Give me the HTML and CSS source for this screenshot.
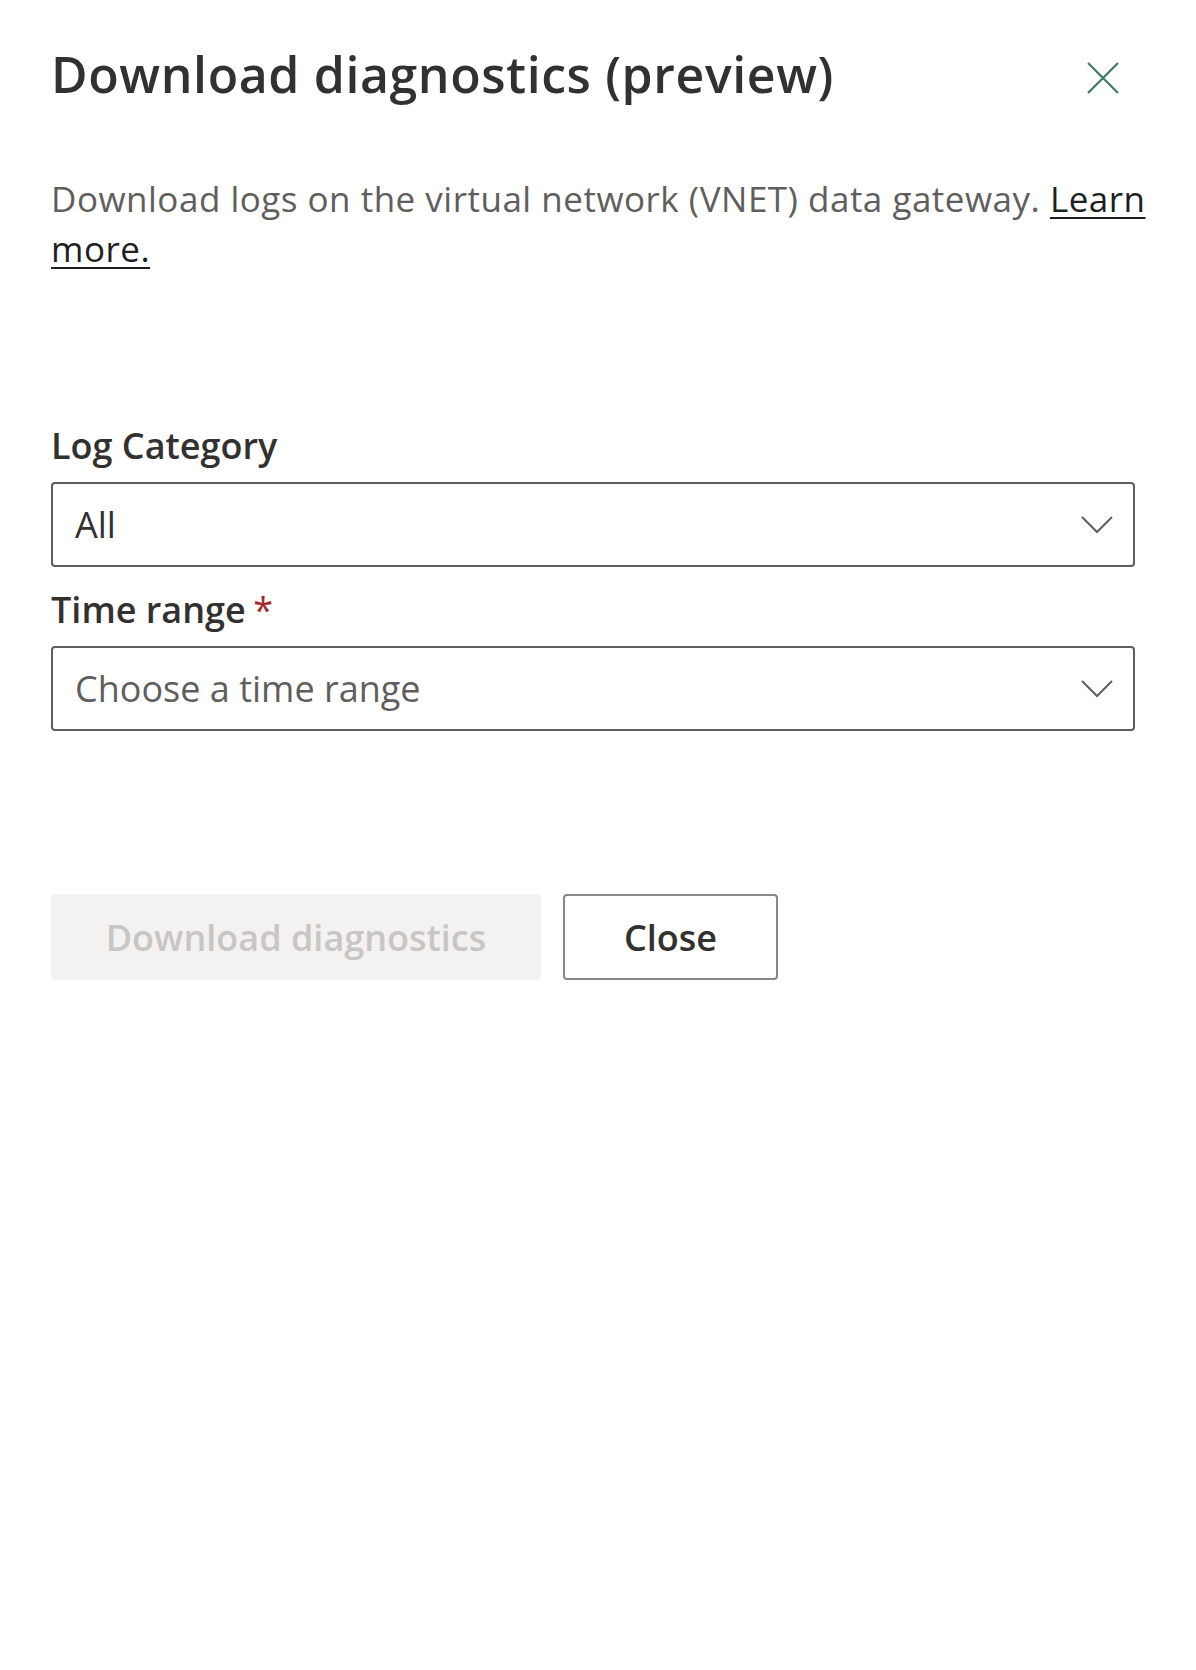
FILE: index.html
```html
<!DOCTYPE html>
<html lang="en">
<head>
<meta charset="utf-8">
<title>Download diagnostics (preview)</title>
<link rel="stylesheet" href="styles.css">
</head>
<body>
<div class="panel">
  <div class="header">
    <h1 class="title">Download diagnostics (preview)</h1>
    <button class="close-x" aria-label="Close">
      <svg width="32" height="32" viewBox="0 0 32 32"><path d="M1 1 L31 31 M31 1 L1 31" stroke="#3e7a66" stroke-width="2.2" fill="none"/></svg>
    </button>
  </div>
  <p class="desc">Download logs on the virtual network (VNET) data gateway. <a href="#" class="link">Learn more.</a></p>
  <div class="form">
    <label class="label">Log Category</label>
    <div class="dropdown">
      <span class="value">All</span>
      <svg class="chev" width="32" height="18" viewBox="0 0 32 18"><path d="M1 1 L16 16 L31 1" stroke="#605e5c" stroke-width="2" fill="none"/></svg>
    </div>
    <label class="label label-req">Time range <span class="req">*</span></label>
    <div class="dropdown">
      <span class="value placeholder">Choose a time range</span>
      <svg class="chev" width="32" height="18" viewBox="0 0 32 18"><path d="M1 1 L16 16 L31 1" stroke="#605e5c" stroke-width="2" fill="none"/></svg>
    </div>
  </div>
  <div class="actions">
    <button class="btn btn-primary" disabled>Download diagnostics</button>
    <button class="btn btn-default">Close</button>
  </div>
</div>
</body>
</html>
```

FILE: styles.css
```css
html, body {
  margin: 0;
  padding: 0;
  background: #ffffff;
}
body {
  font-family: "Segoe UI", "Open Sans", sans-serif;
  color: #323130;
}
.panel {
  padding: 0 51px;
  width: 1094px;
}
.header {
  display: flex;
  justify-content: space-between;
  align-items: flex-start;
  padding-top: 44px;
}
.title {
  margin: 0;
  font-size: 50px;
  line-height: 60px;
  font-weight: 600;
  color: #323130;
  letter-spacing: 0.6px;
}
.close-x {
  border: 0;
  background: transparent;
  padding: 0;
  margin: 18px 26px 0 0;
  width: 32px;
  height: 32px;
  display: flex;
}
.desc {
  margin: 70px 0 0 0;
  font-size: 35px;
  line-height: 50px;
  color: #605e5c;
  width: 1100px;
  letter-spacing: 0.5px;
}
.link {
  color: #201f1e;
  text-decoration: underline;
  text-underline-offset: 5px;
  text-decoration-thickness: 2px;
}
.form {
  display: flex;
  flex-direction: column;
  width: 1084px;
  margin-top: 147px;
}
.label {
  font-size: 36px;
  line-height: 50px;
  font-weight: 600;
  color: #323130;
  padding-bottom: 11px;
}
.req {
  color: #a4262c;
  font-weight: 400;
  margin-left: -2px;
}
.dropdown {
  box-sizing: border-box;
  height: 85px;
  border: 2px solid #605e5c;
  border-radius: 4px;
  display: flex;
  align-items: center;
  justify-content: space-between;
  padding: 0 20px 0 22px;
  margin-bottom: 18px;
}
.value {
  font-size: 36px;
  color: #323130;
}
.placeholder {
  color: #605e5c;
}
.chev {
  display: block;
}
.actions {
  display: flex;
  gap: 22px;
  margin-top: 145px;
}
.btn {
  box-sizing: border-box;
  height: 86px;
  border-radius: 4px;
  font-family: inherit;
  font-size: 36px;
  font-weight: 600;
  padding: 0 20px;
}
.btn-primary {
  width: 490px;
  background: #f3f2f1;
  color: #c8c6c4;
  border: 0;
}
.btn-default {
  width: 215px;
  background: #ffffff;
  color: #323130;
  border: 2px solid #8a8886;
}
```
